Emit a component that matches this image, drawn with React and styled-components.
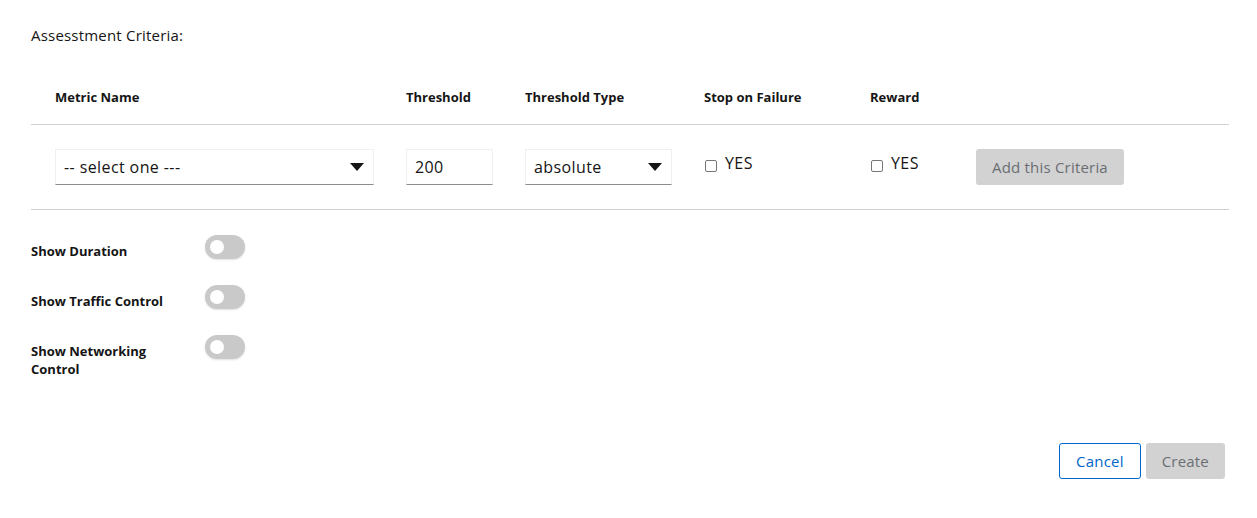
import React from "react";
import styled, { createGlobalStyle } from "styled-components";

const Global = createGlobalStyle`
  html, body { margin: 0; padding: 0; background: #fff; }
  body { font-family: "Open Sans", "Liberation Sans", sans-serif; color: #151515; }
  * { box-sizing: border-box; }
`;

const Page = styled.div`
  width: 1257px;
  height: 518px;
  padding: 25px 32px 0 31px;
  display: flex;
  flex-direction: column;
`;

const Title = styled.div`
  font-size: 15px;
  letter-spacing: 0.2px;
  line-height: 20px;
  height: 20px;
`;

const Table = styled.div`
  margin-top: 25px;
  margin-right: -4px;
  display: flex;
  flex-direction: column;
`;

const Row = styled.div`
  display: grid;
  grid-template-columns: 319px 87px 147px 134px 74px 147px 1fr;
  column-gap: 32px;
  padding: ${(p) => p.$pad} 0 ${(p) => p.$pad} 24px;
  border-bottom: 1px solid #d2d2d2;
  align-items: center;
`;

const HeadCell = styled.div`
  font-size: 13px;
  font-weight: 700;
  line-height: 18px;
`;

const Cell = styled.div`
  display: flex;
  align-items: center;
`;

const SelectBox = styled.div`
  width: 100%;
  height: 36px;
  border: 1px solid #f0f0f0;
  border-bottom-color: #8a8d90;
  display: flex;
  align-items: center;
  justify-content: space-between;
  padding: 0 8px 0 8px;
  font-size: 16px;
  letter-spacing: 0.4px;
  color: #151515;
`;

const Caret = styled.svg`
  width: 14px;
  height: 8px;
  margin-right: 1px;
`;

const TextInput = styled.div`
  width: 87px;
  height: 36px;
  border: 1px solid #f0f0f0;
  border-bottom-color: #8a8d90;
  display: flex;
  align-items: center;
  padding: 0 8px;
  font-size: 16px;
  letter-spacing: 0.4px;
`;

const CheckLabel = styled.label`
  display: flex;
  align-items: center;
  gap: 8px;
  font-size: 16px;
  letter-spacing: 0.4px;
  margin-top: -8px;
`;

const Box = styled.span`
  width: 12px;
  height: 12px;
  border: 1px solid #767676;
  border-radius: 2px;
  margin-top: 6px;
  margin-left: 1px;
  background: #fff;
`;

const GreyButton = styled.button`
  height: 36px;
  padding: 0 16px;
  border: none;
  border-radius: 3px;
  background: #d2d2d2;
  color: #6a6e73;
  font-family: inherit;
  font-size: 15px;
  letter-spacing: 0.2px;
  white-space: nowrap;
`;

const OutlineButton = styled(GreyButton)`
  background: #fff;
  color: #0066cc;
  border: 1px solid #0066cc;
`;

const Toggles = styled.div`
  margin-top: 25px;
  display: flex;
  flex-direction: column;
  gap: 25px;
`;

const ToggleRow = styled.div`
  display: grid;
  grid-template-columns: 174px 40px;
  align-items: start;
`;

const ToggleLabel = styled.div`
  font-size: 13px;
  font-weight: 700;
  line-height: 18px;
  padding-top: 7px;
  width: 140px;
`;

const Switch = styled.span`
  width: 40px;
  height: 24px;
  border-radius: 12px;
  background: #c9c9c9;
  box-shadow: 0 1px 2px rgba(0,0,0,0.12);
  position: relative;
  &::after {
    content: "";
    position: absolute;
    left: 5px;
    top: 5px;
    width: 14px;
    height: 14px;
    border-radius: 50%;
    background: #fff;
  }
`;

const Footer = styled.div`
  margin-top: auto;
  margin-bottom: 39px;
  display: flex;
  justify-content: flex-end;
  gap: 5px;
`;

const CaretIcon = () => (
  <Caret viewBox="0 0 14 8"><path d="M0 0h14L7 8z" fill="#151515" /></Caret>
);

export default function App() {
  return (
    <>
      <Global />
      <Page>
        <Title>Assesstment Criteria:</Title>
        <Table>
          <Row $pad="18px">
            <HeadCell>Metric Name</HeadCell>
            <HeadCell>Threshold</HeadCell>
            <HeadCell>Threshold Type</HeadCell>
            <HeadCell>Stop on Failure</HeadCell>
            <HeadCell>Reward</HeadCell>
            <div />
            <div />
          </Row>
          <Row $pad="24px">
            <Cell><SelectBox>-- select one ---<CaretIcon /></SelectBox></Cell>
            <Cell><TextInput>200</TextInput></Cell>
            <Cell><SelectBox>absolute<CaretIcon /></SelectBox></Cell>
            <Cell><CheckLabel><Box />YES</CheckLabel></Cell>
            <Cell><CheckLabel><Box />YES</CheckLabel></Cell>
            <Cell><GreyButton>Add this Criteria</GreyButton></Cell>
            <div />
          </Row>
        </Table>
        <Toggles>
          <ToggleRow><ToggleLabel>Show Duration</ToggleLabel><Switch /></ToggleRow>
          <ToggleRow><ToggleLabel>Show Traffic Control</ToggleLabel><Switch /></ToggleRow>
          <ToggleRow><ToggleLabel>Show Networking Control</ToggleLabel><Switch /></ToggleRow>
        </Toggles>
        <Footer>
          <OutlineButton>Cancel</OutlineButton>
          <GreyButton>Create</GreyButton>
        </Footer>
      </Page>
    </>
  );
}
